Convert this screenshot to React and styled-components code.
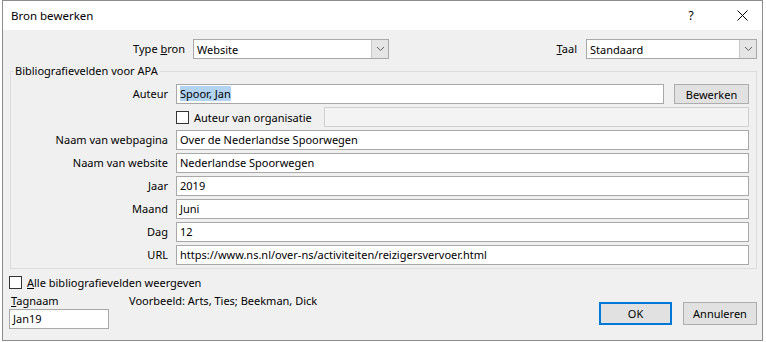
import React from 'react'
import styled, { createGlobalStyle } from 'styled-components'

const GlobalStyle = createGlobalStyle`
  body {
    margin: 0;
    background: #fff;
    font-family: "Noto Sans", "Segoe UI", sans-serif;
    font-size: 11px;
    color: #000;
  }
  * { box-sizing: border-box; }
`

const Window = styled.div`
  margin-left: 2px;
  width: 761px;
  height: 341px;
  border: 1px solid #8c8c8c;
  background: #f0f0f0;
  display: flex;
  flex-direction: column;
`

const TitleBar = styled.div`
  height: 29px;
  background: #fff;
  display: flex;
  align-items: center;
  padding-left: 8px;
  font-size: 11.5px;
`

const TitleButtons = styled.div`
  margin-left: auto;
  display: flex;
  gap: 11px;
  height: 100%;
`

const TitleButton = styled.div`
  width: 40px;
  display: flex;
  align-items: center;
  justify-content: center;
  font-size: 12px;
`

const Body = styled.div`
  flex: 1;
  display: flex;
  flex-direction: column;
  padding-top: 9px;
`

const TopRow = styled.div`
  display: grid;
  grid-template-columns: 190px 196px 197px 171px;
  height: 20px;
  align-items: center;
`

const Label = styled.label`
  text-align: right;
  padding-right: ${p => p.$pad ?? 8}px;
  line-height: 20px;
  white-space: nowrap;
`

const SelectBox = styled.div`
  height: 20px;
  border: 1px solid #a8a8a8;
  background: #fff;
  display: flex;
  align-items: center;
`

const SelectText = styled.span`
  flex: 1;
  padding-left: 3px;
`

const SelectArrow = styled.div`
  width: 17px;
  height: 18px;
  background: #e5e5e5;
  border-left: 1px solid #c8c8c8;
  display: flex;
  align-items: center;
  justify-content: center;
`

const Group = styled.fieldset`
  margin: 4px 5px 0 7px;
  padding: 5px 6px 3px 0;
  border: 1px solid #dcdcdc;
  min-width: 0;
`

const Legend = styled.legend`
  margin-left: 2px;
  padding: 0 2px;
  line-height: 16px;
`

const FieldGrid = styled.div`
  display: grid;
  grid-template-columns: 165px 573px;
  grid-auto-rows: 20px;
  row-gap: 3px;
`

const Input = styled.div`
  height: 20px;
  border: 1px solid ${p => (p.$disabled ? '#cfcfcf' : '#a8a8a8')};
  background: ${p => (p.$disabled ? '#f3f3f3' : '#fff')};
  padding-left: 3px;
  line-height: 18px;
  white-space: nowrap;
  overflow: hidden;
  width: ${p => (p.$width ? `${p.$width}px` : 'auto')};
  flex: ${p => (p.$grow ? 1 : 'none')};
  margin-left: ${p => (p.$push ? 'auto' : '0')};
`

const Selected = styled.span`
  background: #b2d4f2;
`

const FieldRow = styled.div`
  display: flex;
  align-items: center;
  gap: ${p => p.$gap ?? 0}px;
`

const Button = styled.button`
  font: inherit;
  color: #000;
  height: ${p => p.$h ?? 20}px;
  width: ${p => p.$w}px;
  background: #e1e1e1;
  border: ${p => (p.$default ? '2px solid #0078d7' : '1px solid #adadad')};
  padding: 0;
`

const CheckRow = styled.label`
  display: flex;
  align-items: center;
  gap: 5px;
  white-space: nowrap;
`

const Box = styled.span`
  width: 13px;
  height: 13px;
  border: 1px solid #333;
  background: #fff;
  flex: none;
`

const Bottom = styled.div`
  display: flex;
  justify-content: space-between;
  padding: 0 5px 0 6px;
`

const LeftCol = styled.div`
  display: flex;
  flex-direction: column;
  padding-top: 6px;
`

const TagRow = styled.div`
  display: flex;
  line-height: 16px;
  margin-top: 3px;
`

const TagLabel = styled.span`
  width: 120px;
  padding-left: 2px;
`

const Buttons = styled.div`
  display: flex;
  gap: 11px;
  padding-top: 33px;
`

const fields = [
  ['Naam van webpagina', 'Over de Nederlandse Spoorwegen'],
  ['Naam van website', 'Nederlandse Spoorwegen'],
  ['Jaar', '2019'],
  ['Maand', 'Juni'],
  ['Dag', '12'],
  ['URL', 'https://www.ns.nl/over-ns/activiteiten/reizigersvervoer.html'],
]

function Chevron() {
  return (
    <svg width="9" height="6" viewBox="0 0 9 6">
      <path d="M1 1 L4.5 4.5 L8 1" fill="none" stroke="#606060" strokeWidth="1" />
    </svg>
  )
}

function Select({ value }) {
  return (
    <SelectBox>
      <SelectText>{value}</SelectText>
      <SelectArrow>
        <Chevron />
      </SelectArrow>
    </SelectBox>
  )
}

export default function App() {
  return (
    <>
      <GlobalStyle />
      <Window>
        <TitleBar>
          Bron bewerken
          <TitleButtons>
            <TitleButton>?</TitleButton>
            <TitleButton>
              <svg width="11" height="11" viewBox="0 0 11 11">
                <path d="M0.5 0.5 L10.5 10.5 M10.5 0.5 L0.5 10.5" stroke="#000" strokeWidth="1" />
              </svg>
            </TitleButton>
          </TitleButtons>
        </TitleBar>
        <Body>
          <TopRow>
            <Label>Type <u>b</u>ron</Label>
            <Select value="Website" />
            <Label $pad={9}><u>T</u>aal</Label>
            <Select value="Standaard" />
          </TopRow>
          <Group>
            <Legend>Bibliografievelden voor APA</Legend>
            <FieldGrid>
              <Label>Auteur</Label>
              <FieldRow $gap={10}>
                <Input $grow>
                  <Selected>Spoor, Jan</Selected>
                </Input>
                <Button $w={75}>Bewerken</Button>
              </FieldRow>
              <span />
              <FieldRow>
                <CheckRow>
                  <Box />
                  Auteur van organisatie
                </CheckRow>
                <Input $disabled $push $width={425} />
              </FieldRow>
              {fields.map(([label, value]) => (
                <React.Fragment key={label}>
                  <Label>{label}</Label>
                  <Input>{value}</Input>
                </React.Fragment>
              ))}
            </FieldGrid>
          </Group>
          <Bottom>
            <LeftCol>
              <CheckRow>
                <Box />
                <span><u>A</u>lle bibliografievelden weergeven</span>
              </CheckRow>
              <TagRow>
                <TagLabel><u>T</u>agnaam</TagLabel>
                <span>Voorbeeld: Arts, Ties; Beekman, Dick</span>
              </TagRow>
              <Input $width={100}>Jan19</Input>
            </LeftCol>
            <Buttons>
              <Button $w={73} $h={23} $default>OK</Button>
              <Button $w={74} $h={23}>Annuleren</Button>
            </Buttons>
          </Bottom>
        </Body>
      </Window>
    </>
  )
}
